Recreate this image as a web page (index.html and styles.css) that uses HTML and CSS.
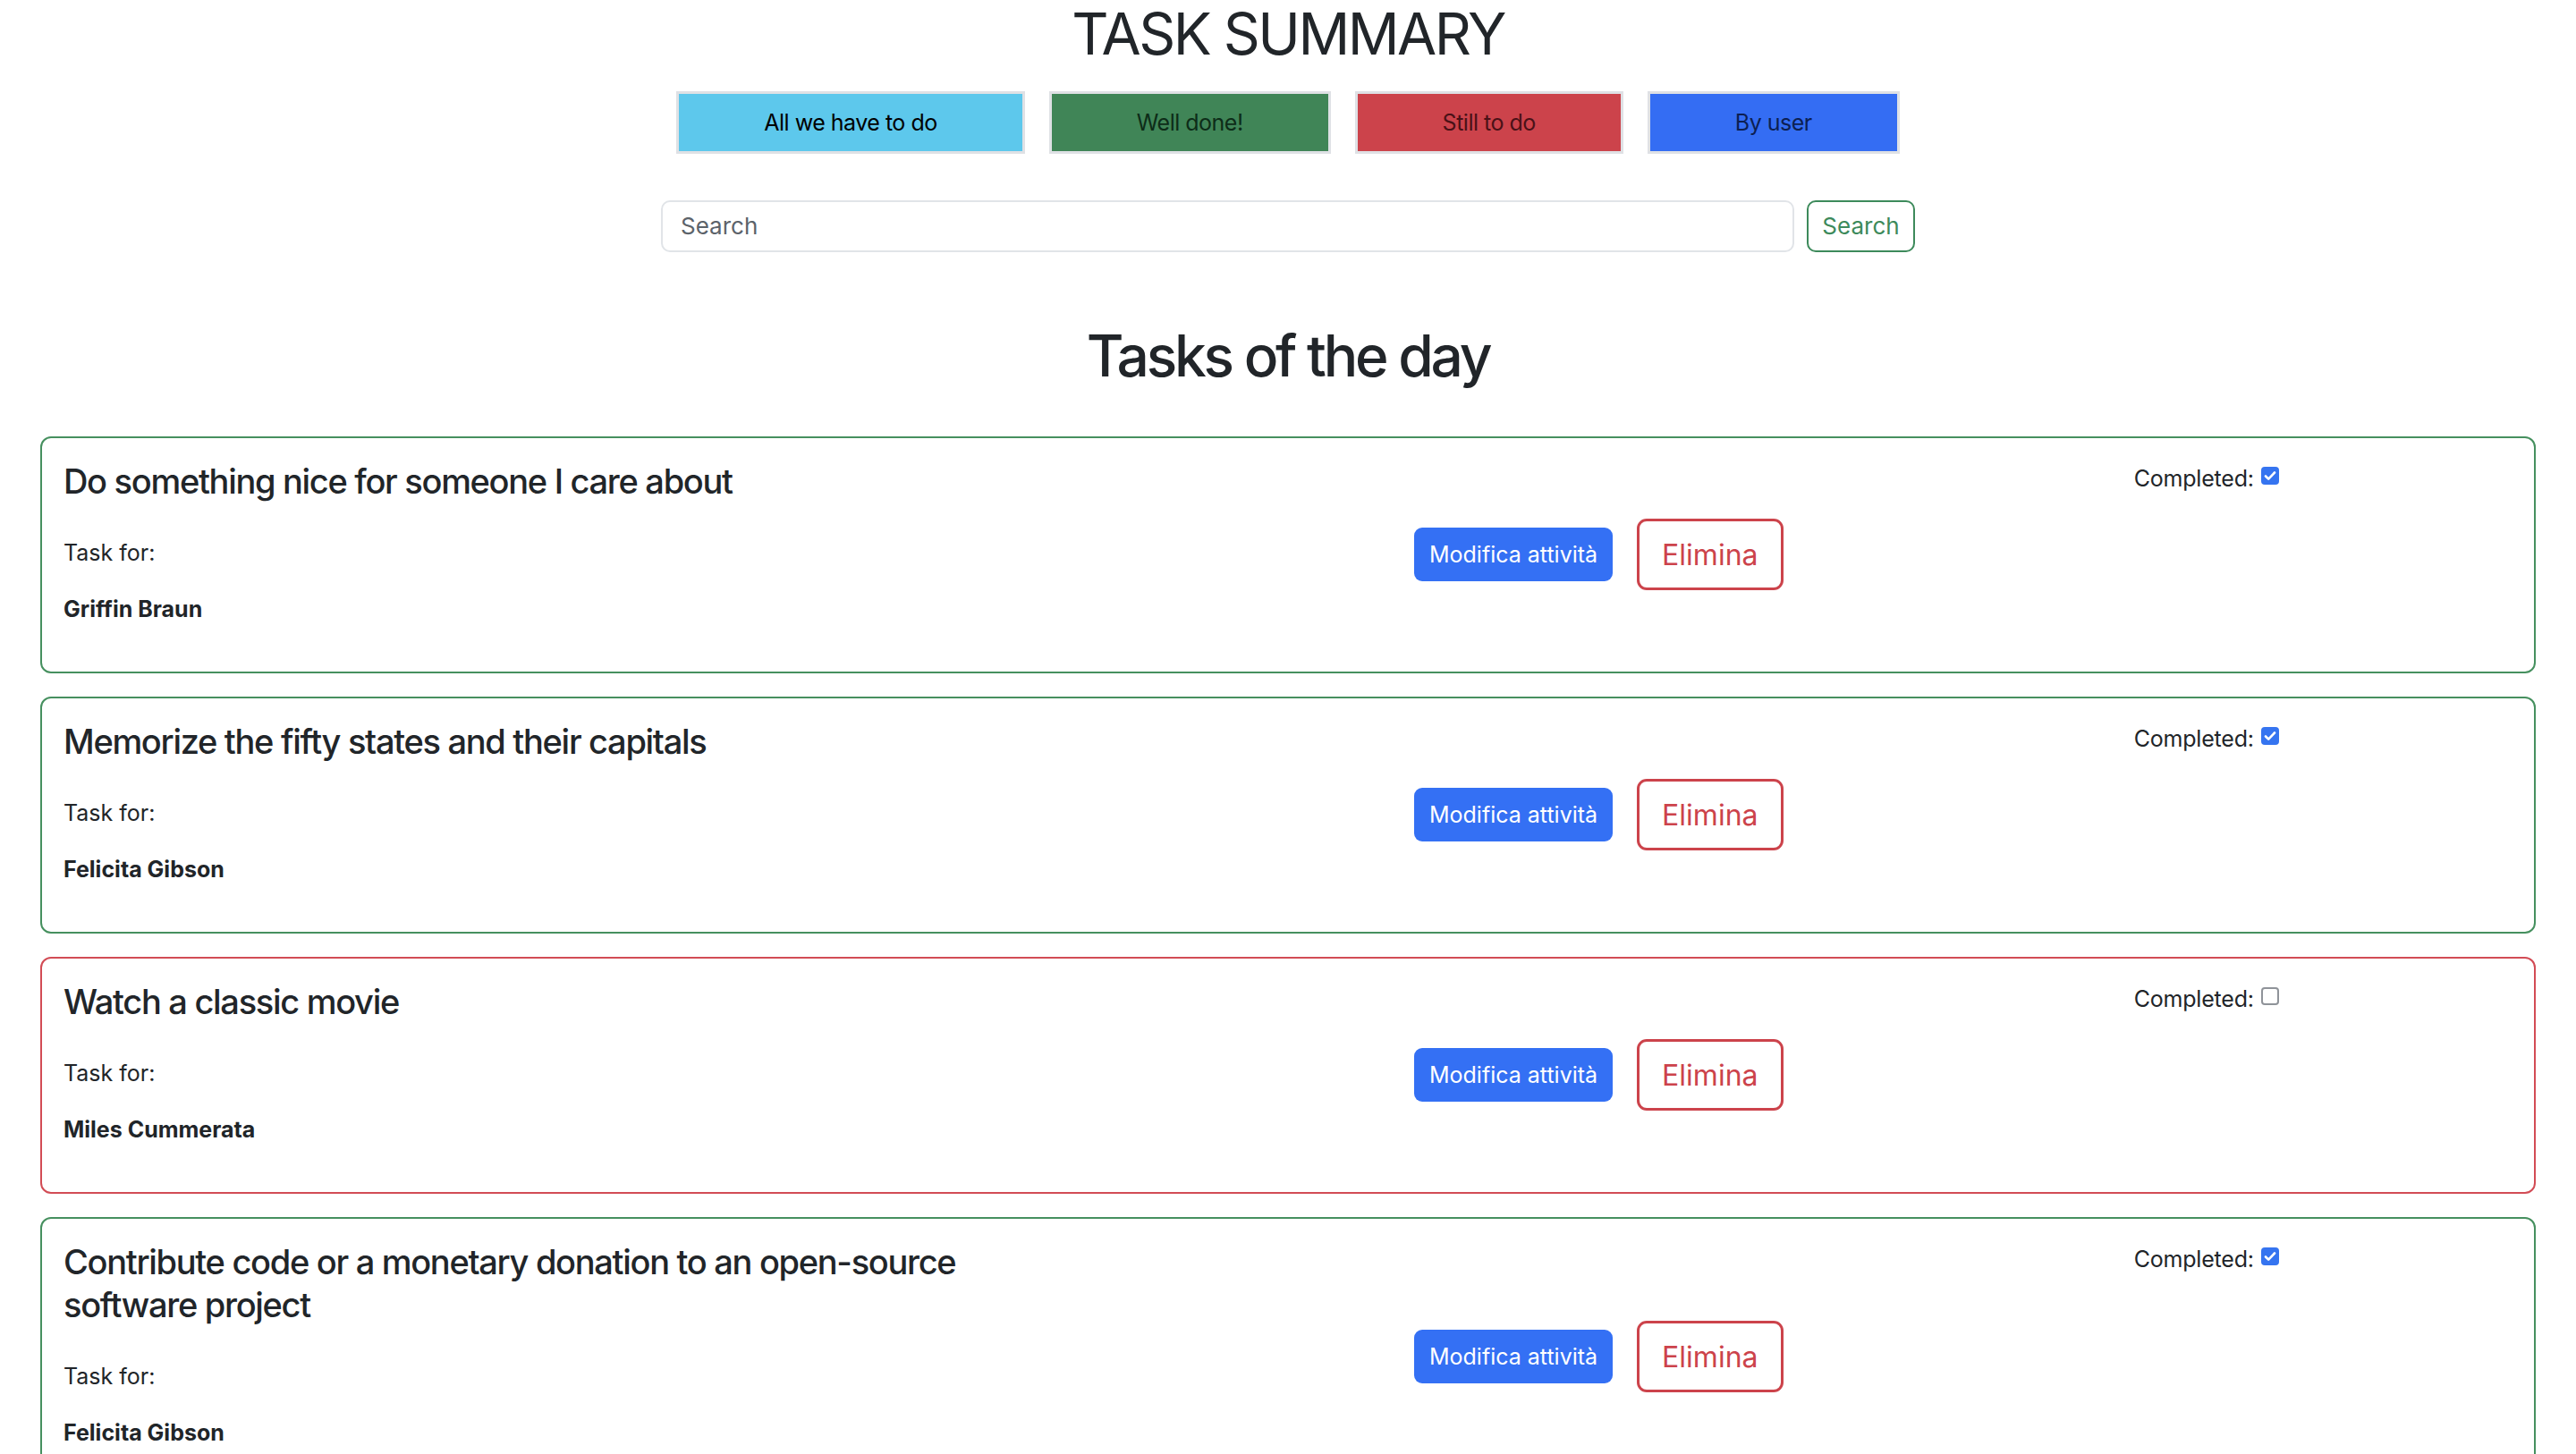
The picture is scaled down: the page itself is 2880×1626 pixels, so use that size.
FILE: index.html
```html
<!DOCTYPE html>
<html lang="en">
<head>
<meta charset="utf-8">
<title>Task Summary</title>
<link rel="stylesheet" href="styles.css">
</head>
<body>
<div class="page">
  <header class="top">
    <h2 class="title">TASK SUMMARY</h2>
    <nav class="filters">
      <button class="filter filter-all">All we have to do</button>
      <button class="filter filter-done">Well done!</button>
      <button class="filter filter-todo">Still to do</button>
      <button class="filter filter-user">By user</button>
    </nav>
    <form class="search">
      <input class="search-input" type="text" placeholder="Search">
      <button class="search-btn" type="button">Search</button>
    </form>
  </header>

  <h2 class="section-title">Tasks of the day</h2>

  <div class="cards">
    <div class="card card-done">
      <div class="info">
        <h5 class="card-title">Do something nice for someone I care about</h5>
        <p class="label">Task for:</p>
        <p class="user">Griffin Braun</p>
      </div>
      <div class="actions">
        <button class="btn-edit">Modifica attività</button>
        <button class="btn-delete">Elimina</button>
      </div>
      <div class="status">Completed: <span class="check checked"><svg viewBox="0 0 20 20" width="20" height="20"><path d="M5 10.5l3.2 3.2L15 6.5" fill="none" stroke="#fff" stroke-width="2.6" stroke-linecap="round" stroke-linejoin="round"/></svg></span></div>
    </div>

    <div class="card card-done">
      <div class="info">
        <h5 class="card-title">Memorize the fifty states and their capitals</h5>
        <p class="label">Task for:</p>
        <p class="user">Felicita Gibson</p>
      </div>
      <div class="actions">
        <button class="btn-edit">Modifica attività</button>
        <button class="btn-delete">Elimina</button>
      </div>
      <div class="status">Completed: <span class="check checked"><svg viewBox="0 0 20 20" width="20" height="20"><path d="M5 10.5l3.2 3.2L15 6.5" fill="none" stroke="#fff" stroke-width="2.6" stroke-linecap="round" stroke-linejoin="round"/></svg></span></div>
    </div>

    <div class="card card-todo">
      <div class="info">
        <h5 class="card-title">Watch a classic movie</h5>
        <p class="label">Task for:</p>
        <p class="user">Miles Cummerata</p>
      </div>
      <div class="actions">
        <button class="btn-edit">Modifica attività</button>
        <button class="btn-delete">Elimina</button>
      </div>
      <div class="status">Completed: <span class="check"></span></div>
    </div>

    <div class="card card-done">
      <div class="info">
        <h5 class="card-title">Contribute code or a monetary donation to an open-source software project</h5>
        <p class="label">Task for:</p>
        <p class="user">Felicita Gibson</p>
      </div>
      <div class="actions">
        <button class="btn-edit">Modifica attività</button>
        <button class="btn-delete">Elimina</button>
      </div>
      <div class="status">Completed: <span class="check checked"><svg viewBox="0 0 20 20" width="20" height="20"><path d="M5 10.5l3.2 3.2L15 6.5" fill="none" stroke="#fff" stroke-width="2.6" stroke-linecap="round" stroke-linejoin="round"/></svg></span></div>
    </div>
  </div>
</div>
</body>
</html>
```

FILE: styles.css
```css
* { box-sizing: border-box; }

body {
  margin: 0;
  font-family: Inter, "Liberation Sans", sans-serif;
  color: #212529;
  background: #fff;
}

.page {
  padding: 0 45px 40px;
}

.top {
  display: flex;
  flex-direction: column;
  align-items: center;
}

.title {
  margin: 0;
  font-size: 64px;
  font-weight: 400;
  line-height: 1.2;
  letter-spacing: -2.5px;
  color: #212529;
}

.filters {
  margin-top: 25px;
  display: flex;
  gap: 27px;
}

.filter {
  height: 70px;
  padding: 0 95px;
  border: 3px solid #dfe1e5;
  font-family: Inter, "Liberation Sans", sans-serif;
  font-size: 25px;
  letter-spacing: -0.5px;
  border-radius: 0;
}

.filter-all { background: #5dc8ec; color: #000; }
.filter-done { background: #408557; color: #0d2c18; }
.filter-todo { background: #cc434b; color: #4a1117; }
.filter-user { background: #346df3; color: #0c1f52; }

.search {
  margin-top: 52px;
  width: 1402px;
  display: flex;
  gap: 14px;
}

.search-input {
  flex: 1;
  height: 58px;
  border: 2px solid #e1e4e8;
  border-radius: 10px;
  padding: 0 20px;
  font-family: Inter, "Liberation Sans", sans-serif;
  font-size: 26px;
  color: #212529;
}

.search-input::placeholder { color: #5c636a; }

.search-btn {
  width: 121px;
  height: 58px;
  border: 2px solid #3d8a5b;
  border-radius: 10px;
  background: #fff;
  color: #3d8a5b;
  font-family: Inter, "Liberation Sans", sans-serif;
  font-size: 26px;
  padding: 0;
}

.section-title {
  margin: 78px 0 51px;
  text-align: center;
  font-size: 64px;
  font-weight: 500;
  line-height: 1.2;
  letter-spacing: -3.2px;
}

.cards {
  display: flex;
  flex-direction: column;
  gap: 26px;
}

.card {
  border: 2px solid #46905f;
  border-radius: 12px;
  padding: 24px;
  display: grid;
  grid-template-columns: 5fr 5fr 1fr 1fr;
}

.card-todo { border-color: #d24c55; }

.card-title {
  margin: 0 0 38px;
  font-size: 38px;
  font-weight: 500;
  line-height: 48px;
  letter-spacing: -1.3px;
}

.label, .user {
  margin: 0 0 26px;
  font-size: 25px;
  line-height: 1.5;
}

.user {
  font-weight: 700;
}

.actions {
  align-self: center;
  display: flex;
  justify-content: center;
  align-items: center;
  gap: 27px;
  padding-left: 10px;
}

.btn-edit {
  height: 60px;
  padding: 0 17px;
  border: none;
  border-radius: 9px;
  background: #3470f4;
  color: #fff;
  font-family: Inter, "Liberation Sans", sans-serif;
  font-size: 25px;
}

.btn-delete {
  height: 80px;
  padding: 0 25px;
  border: 3px solid #cc434b;
  border-radius: 11px;
  background: #fff;
  color: #cc434b;
  font-family: Inter, "Liberation Sans", sans-serif;
  font-size: 32px;
}

.status {
  align-self: start;
  justify-self: center;
  margin-top: 3px;
  white-space: nowrap;
  display: flex;
  align-items: center;
  gap: 8px;
  font-size: 25px;
  line-height: 1.5;
  letter-spacing: -0.2px;
}

.check {
  width: 20px;
  height: 20px;
  border-radius: 4px;
  border: 2px solid #8f9399;
  background: #fff;
  display: inline-flex;
  margin-top: -6px;
}

.check.checked {
  border: none;
  background: #3574f0;
}

.check svg { display: block; }
```
